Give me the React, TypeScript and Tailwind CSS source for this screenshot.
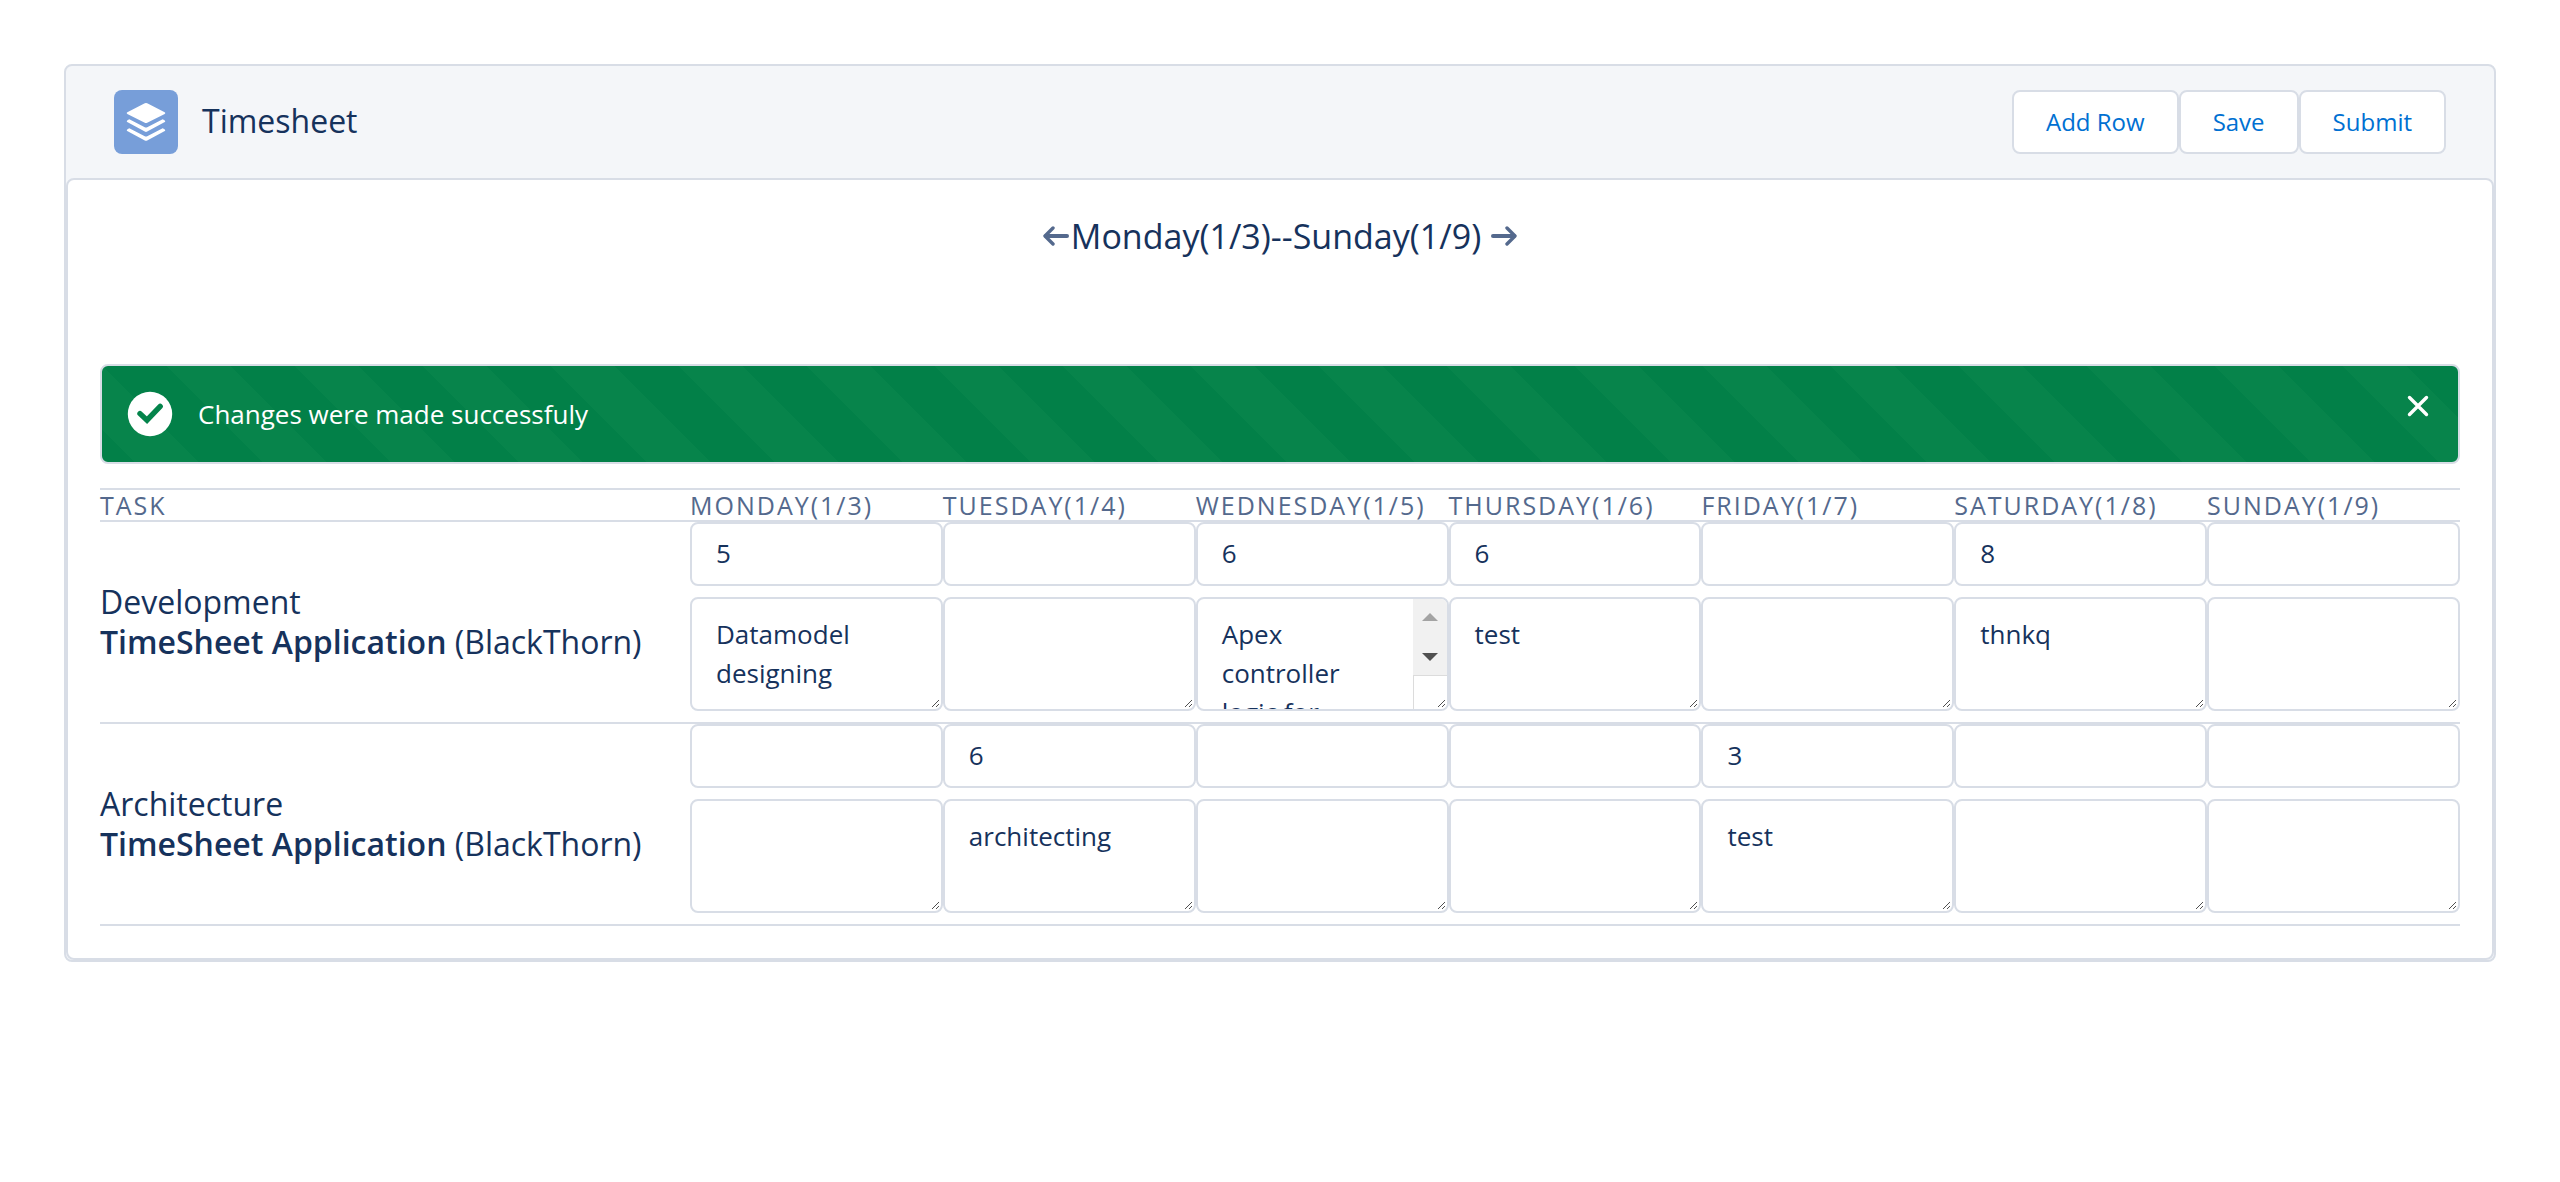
const font = "font-['Open_Sans','Noto_Sans',sans-serif]";

type Entry = { hours: string; note: string; scrolls?: boolean };
type Row = { task: string; project: string; client: string; entries: Entry[] };

const empty: Entry = { hours: "", note: "" };

const days = [
  "Monday(1/3)",
  "Tuesday(1/4)",
  "Wednesday(1/5)",
  "Thursday(1/6)",
  "Friday(1/7)",
  "Saturday(1/8)",
  "Sunday(1/9)",
];

const rows: Row[] = [
  {
    task: "Development",
    project: "TimeSheet Application",
    client: "(BlackThorn)",
    entries: [
      { hours: "5", note: "Datamodel designing" },
      empty,
      { hours: "6", note: "Apex controller logic for", scrolls: true },
      { hours: "6", note: "test" },
      empty,
      { hours: "8", note: "thnkq" },
      empty,
    ],
  },
  {
    task: "Architecture",
    project: "TimeSheet Application",
    client: "(BlackThorn)",
    entries: [
      empty,
      { hours: "6", note: "architecting" },
      empty,
      empty,
      { hours: "3", note: "test" },
      empty,
      empty,
    ],
  },
];

function LayersIcon() {
  return (
    <svg viewBox="0 0 64 64" className="size-16 shrink-0 rounded-lg bg-[#779ed9]" fill="#fff" aria-hidden="true">
      <path d="M30.8 13.3q1.2-.6 2.4 0L50.7 22.2q1.3.8 0 1.7L33.2 32.7q-1.2.6-2.4 0L13.3 23.9q-1.3-.9 0-1.7z" />
      <path d="M30.8 37.2q1.2.6 2.4 0L48.2 29.4q.5-.3 1 0l1.6 1q1 .9 0 1.7L33.2 41.6q-1.2.6-2.4 0L13.2 32.1q-1-.8 0-1.7l1.6-1q.5-.3 1 0z" />
      <path d="M30.8 46.2q1.2.6 2.4 0L48.2 38.4q.5-.3 1 0l1.6 1q1 .9 0 1.7L33.2 50.5q-1.2.6-2.4 0L13.2 41.1q-1-.8 0-1.7l1.6-1q.5-.3 1 0z" />
    </svg>
  );
}

function ArrowIcon({ right }: { right?: boolean }) {
  return (
    <svg viewBox="0 0 26 20" className="h-5 w-[26px]" fill="none" stroke="#54698d" strokeLinecap="round" strokeLinejoin="round" aria-hidden="true">
      <path d={right ? "M2 10h21" : "M24 10H3"} strokeWidth="4" />
      <path d={right ? "M16 2l8 8-8 8" : "M10 2l-8 8 8 8"} strokeWidth="3.4" />
    </svg>
  );
}

function ActionButton({ label }: { label: string }) {
  return (
    <button type="button" className="h-16 rounded-lg border-2 border-[#d8dde6] bg-white px-8 text-2xl text-[#0070d2]">
      {label}
    </button>
  );
}

function ResizeGrip() {
  return (
    <svg viewBox="0 0 9 9" className="pointer-events-none absolute right-[3px] bottom-[3px] size-[9px]" stroke="#505050" aria-hidden="true">
      <path d="M1 8l7-7M5 8l3-3" />
    </svg>
  );
}

function ScrollColumn() {
  return (
    <div className="pointer-events-none absolute top-0.5 right-0.5 bottom-0.5 flex w-[34px] flex-col" aria-hidden="true">
      <div className="flex h-19 flex-col items-center justify-between rounded-tr-md bg-[#f1f1f1] py-3.5">
        <svg viewBox="0 0 16 8" className="h-2 w-4" fill="#a3a3a3"><path d="M0 8l8-8 8 8z" /></svg>
        <svg viewBox="0 0 16 8" className="h-2 w-4" fill="#505050"><path d="M0 0l8 8 8-8z" /></svg>
      </div>
      <div className="flex-1 rounded-br-md border-t border-l border-[#dcdcdc] bg-white" />
    </div>
  );
}

function DayCell({ label, entry }: { label: string; entry: Entry }) {
  const wrap = entry.scrolls ? "pl-6 pr-14" : "px-6";
  return (
    <td className="p-0 align-top">
      <input
        type="text"
        aria-label={label + " hours"}
        defaultValue={entry.hours}
        className="block h-16 w-full rounded-lg border-2 border-[#d8dde6] bg-white px-6 pb-0.5 text-[26px] leading-[39px]"
      />
      <div className="relative my-[11px]">
        <textarea
          aria-label={label + " notes"}
          defaultValue={entry.note}
          rows={2}
          className={"block h-[114px] w-full resize-none overflow-hidden rounded-lg border-2 border-[#d8dde6] bg-white py-4 text-[26px] leading-[39px] " + wrap}
        />
        {entry.scrolls && <ScrollColumn />}
        <ResizeGrip />
      </div>
    </td>
  );
}

export default function App() {
  return (
    <main className={"bg-white p-16 text-[#16325c] " + font}>
      <article className="rounded-lg border-2 border-[#d8dde6] bg-[#f4f6f9]">
        <header className="flex items-center justify-between px-12 py-6">
          <div className="flex items-center gap-6">
            <LayersIcon />
            <h1 className="pb-0.5 text-[32px] leading-10">Timesheet</h1>
          </div>
          <div className="flex">
            <ActionButton label="Add Row" />
            <ActionButton label="Save" />
            <ActionButton label="Submit" />
          </div>
        </header>

        <section className="rounded-lg border-2 border-[#d8dde6] bg-white p-8">
          <nav className="flex h-12 items-center justify-center" aria-label="Week">
            <button type="button" aria-label="Previous week"><ArrowIcon /></button>
            <span className="mr-2.5 ml-0.5 text-[34px] leading-10">Monday(1/3)--Sunday(1/9)</span>
            <button type="button" aria-label="Next week"><ArrowIcon right /></button>
          </nav>

          <div
            role="status"
            className="mt-26 flex h-25 items-center gap-6 rounded-lg border-2 border-[#d8dde6] bg-[#07844b] bg-[linear-gradient(45deg,#028048_25%,transparent_25%,transparent_50%,#028048_50%,#028048_75%,transparent_75%,transparent)] bg-size-[128px_128px] pr-7 pl-6 text-white"
          >
            <svg viewBox="0 0 48 48" className="size-12" fill="none" aria-hidden="true">
              <circle cx="24" cy="24" r="22.2" fill="#fff" />
              <path d="M14 23.6l7 6.6L34.2 16.4" stroke="#04844b" strokeWidth="5.4" strokeLinecap="round" />
            </svg>
            <p className="flex-1 text-[26px] leading-[39px]">Changes were made successfuly</p>
            <button type="button" aria-label="Close" className="mb-4">
              <svg viewBox="0 0 24 24" className="size-6" fill="none" stroke="#fff" strokeWidth="3.4" strokeLinecap="round" aria-hidden="true">
                <path d="M3.5 3.5l17 17M20.5 3.5l-17 17" />
              </svg>
            </button>
          </div>

          <table className="mt-6 w-full table-fixed border-separate border-spacing-0 border-t-2 border-[#d8dde6] text-left">
            <thead>
              <tr className="text-[25px] leading-[30px] tracking-[2px] text-[#54698d] uppercase *:border-b-2 *:border-[#d8dde6] *:p-0 *:font-normal">
                <th scope="col" className="w-1/4">Task</th>
                {days.map((day) => (
                  <th scope="col" key={day}>{day}</th>
                ))}
              </tr>
            </thead>
            <tbody>
              {rows.map((row) => (
                <tr key={row.task} className="*:border-b-2 *:border-[#d8dde6]">
                  <th scope="row" className="p-0 align-middle text-[32px] leading-10 font-normal">
                    <div>{row.task}</div>
                    <div className="whitespace-nowrap">
                      <span className="font-semibold">{row.project}</span> {row.client}
                    </div>
                  </th>
                  {row.entries.map((entry, i) => (
                    <DayCell key={days[i]} label={row.task + " " + days[i]} entry={entry} />
                  ))}
                </tr>
              ))}
            </tbody>
          </table>
        </section>
      </article>
    </main>
  );
}
